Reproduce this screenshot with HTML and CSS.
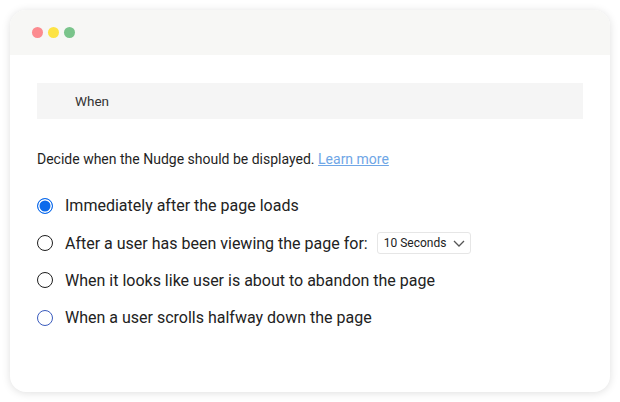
FILE: index.html
```html
<!DOCTYPE html>
<html>
<head>
<meta charset="utf-8">
<link rel="stylesheet" href="styles.css">
</head>
<body>
<div class="window">
  <div class="titlebar">
    <span class="dot red"></span>
    <span class="dot yellow"></span>
    <span class="dot green"></span>
  </div>
  <div class="content">
    <div class="section-head">When</div>
    <p class="desc">Decide when the Nudge should be displayed. <a class="learn">Learn more</a></p>
    <ul class="options">
      <li class="option"><span class="radio checked"></span><span class="label">Immediately after the page loads</span></li>
      <li class="option"><span class="radio"></span><span class="label">After a user has been viewing the page for:</span>
        <span class="select">10 Seconds<svg class="chev" width="12" height="7" viewBox="0 0 12 7"><path d="M1 1l5 5L11 1" fill="none" stroke="#555" stroke-width="1.3"/></svg></span>
      </li>
      <li class="option"><span class="radio"></span><span class="label">When it looks like user is about to abandon the page</span></li>
      <li class="option"><span class="radio focus"></span><span class="label">When a user scrolls halfway down the page</span></li>
    </ul>
  </div>
</div>
</body>
</html>
```
FILE: styles.css
```css
* { box-sizing: border-box; }
html, body { margin: 0; padding: 0; background: #ffffff; }
body { padding: 10px; font-family: Roboto, "Liberation Sans", sans-serif; color: #212121; }
.window {
  width: 600px;
  height: 382px;
  background: #fff;
  border-radius: 16px;
  box-shadow: 0 1px 8px rgba(0,0,0,0.13);
  overflow: hidden;
}
.titlebar {
  height: 45px;
  background: #f7f7f5;
  display: flex;
  align-items: center;
  padding-left: 22px;
  gap: 5px;
}
.dot { width: 11px; height: 11px; border-radius: 50%; display: block; }
.red { background: #fc8b8f; }
.yellow { background: #fde344; }
.green { background: #7ac48b; }
.content { padding: 28px 27px 0 27px; }
.section-head {
  height: 36px;
  background: #f5f5f5;
  display: flex;
  align-items: center;
  padding-left: 38px;
  font-size: 13.5px;
  color: #333;
}
.desc {
  margin: 31px 0 0 0;
  font-size: 14px;
  line-height: 18px;
  color: #1f1f1f;
}
.learn { color: #6fa6e6; text-decoration: underline; }
.options { list-style: none; margin: 19px 0 0 0; padding: 0; }
.option {
  height: 37.4px;
  display: flex;
  align-items: center;
  font-size: 16px;
  color: #222;
}
.radio {
  width: 16px;
  height: 16px;
  border-radius: 50%;
  border: 1.5px solid #1e1e1e;
  margin-right: 12px;
  flex: none;
  background: #fff;
}
.radio.checked {
  border-color: #0d6bec;
  background: #0d6bec;
  box-shadow: inset 0 0 0 1.5px #fff;
}
.radio.focus { border-color: #3a5bbd; }
.select {
  margin-left: 9px;
  width: 94px;
  height: 22px;
  border: 1px solid #e6e6e6;
  border-radius: 3px;
  display: flex;
  align-items: center;
  padding: 0 5px 0 6px;
  font-size: 12px;
  color: #222;
  justify-content: space-between;
}
.chev { display: block; }
```
